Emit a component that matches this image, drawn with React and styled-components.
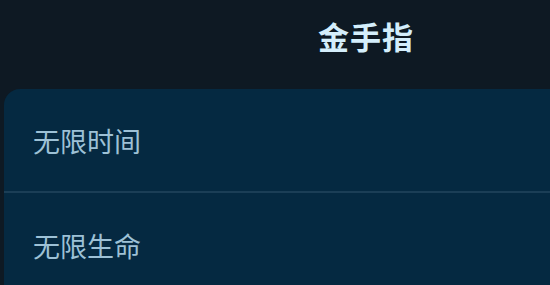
import styled, { createGlobalStyle } from "styled-components";

const GlobalStyle = createGlobalStyle`
  html, body {
    margin: 0;
    padding: 0;
    background: #0e1923;
    overflow: hidden;
  }
  body {
    font-family: "Noto Sans CJK SC", "Noto Sans", sans-serif;
  }
`;

const Page = styled.div`
  width: 732px;
  height: 285px;
  padding: 0 4px;
  box-sizing: border-box;
  background: #0e1923;
`;

const Header = styled.h1`
  margin: 0;
  height: 89px;
  display: flex;
  align-items: center;
  justify-content: center;
  padding-bottom: 18px;
  box-sizing: border-box;
  font-size: 31px;
  font-weight: 700;
  color: #d4eefb;
  letter-spacing: 1px;
`;

const Card = styled.div`
  background: #052941;
  border-radius: 16px 16px 0 0;
  overflow: hidden;
`;

const Row = styled.div`
  height: 104px;
  display: flex;
  align-items: center;
  padding: 0 29px;
  box-sizing: border-box;
  border-bottom: ${({ $last }) => ($last ? "none" : "2px solid #1b3e56")};
  font-size: 27px;
  color: #9dc1d6;
`;

const cheats = ["无限时间", "无限生命"];

const App = () => {
  return (
    <>
      <GlobalStyle />
      <Page>
        <Header>金手指</Header>
        <Card>
          {cheats.map((name, i) => (
            <Row key={name} $last={i === cheats.length - 1}>
              {name}
            </Row>
          ))}
        </Card>
      </Page>
    </>
  );
};

export default App;
